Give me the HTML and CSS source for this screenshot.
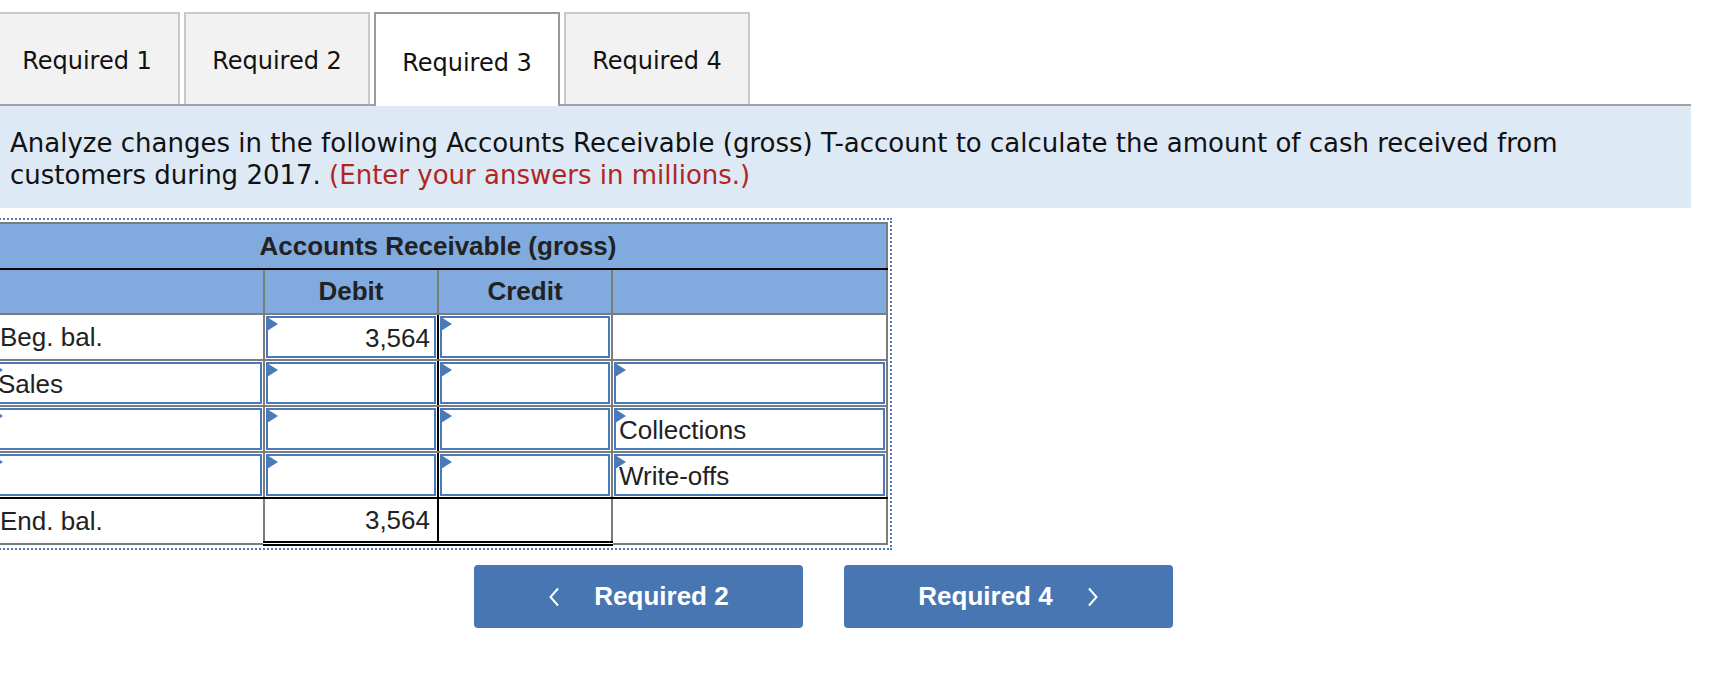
FILE: index.html
```html
<!DOCTYPE html>
<html>
<head>
<meta charset="utf-8">
<link rel="stylesheet" href="styles.css">
</head>
<body>
<div class="page">
  <div class="tabs">
    <div class="tab">Required 1</div>
    <div class="tab">Required 2</div>
    <div class="tab active">Required 3</div>
    <div class="tab">Required 4</div>
  </div>
  <div class="band">
    Analyze changes in the following Accounts Receivable (gross) T-account to calculate the amount of cash received from customers during 2017. <span class="hint">(Enter your answers in millions.)</span>
  </div>
  <div class="twrap">
    <table class="tacct">
      <colgroup>
        <col class="c-lab"><col class="c-num"><col class="c-num"><col class="c-rlab">
      </colgroup>
      <tr class="h1"><th colspan="4">Accounts Receivable (gross)</th></tr>
      <tr class="h2"><th></th><th>Debit</th><th>Credit</th><th></th></tr>
      <tr class="r">
        <td class="lab"><div class="txt">Beg. bal.</div></td>
        <td class="deb in"><div class="inp num">3,564</div></td>
        <td class="in"><div class="inp"></div></td>
        <td class="rlab"></td>
      </tr>
      <tr class="r">
        <td class="in"><div class="inp lead">Sales</div></td>
        <td class="deb in"><div class="inp"></div></td>
        <td class="in"><div class="inp"></div></td>
        <td class="in"><div class="inp"></div></td>
      </tr>
      <tr class="r">
        <td class="in"><div class="inp lead"></div></td>
        <td class="deb in"><div class="inp"></div></td>
        <td class="in"><div class="inp"></div></td>
        <td class="in"><div class="inp">Collections</div></td>
      </tr>
      <tr class="r last">
        <td class="in"><div class="inp lead"></div></td>
        <td class="deb in"><div class="inp"></div></td>
        <td class="in"><div class="inp"></div></td>
        <td class="in"><div class="inp">Write-offs</div></td>
      </tr>
      <tr class="r end">
        <td class="lab"><div class="txt">End. bal.</div></td>
        <td class="deb tot"><div class="txt num">3,564</div></td>
        <td class="tot"><div class="txt"></div></td>
        <td class="rlab"></td>
      </tr>
    </table>
  </div>
  <div class="nav">
    <div class="btn">
      <svg class="chev" width="12" height="20" viewBox="0 0 12 20"><polyline points="10,1.5 2.5,10 10,18.5" fill="none" stroke="#fff" stroke-width="2"/></svg>
      <span>Required 2</span>
    </div>
    <div class="btn">
      <span>Required 4</span>
      <svg class="chev" width="12" height="20" viewBox="0 0 12 20"><polyline points="2,1.5 9.5,10 2,18.5" fill="none" stroke="#fff" stroke-width="2"/></svg>
    </div>
  </div>
</div>
</body>
</html>
```
FILE: styles.css
```css
html, body {
  margin: 0;
  padding: 0;
  background: #fff;
}
.page {
  width: 1691px;
  font-family: "DejaVu Sans", Verdana, sans-serif;
  color: #111;
}
.tabs {
  display: flex;
  gap: 4px;
  margin-left: -6px;
  padding-top: 12px;
  border-bottom: 2px solid #a3a3a3;
}
.tab {
  box-sizing: border-box;
  width: 186px;
  height: 92px;
  background: #f2f2f2;
  border: 2px solid #c9c9c9;
  border-bottom: none;
  display: flex;
  align-items: center;
  justify-content: center;
  font-size: 24px;
  padding-top: 4px;
}
.tab.active {
  background: #fff;
  border-color: #9a9a9a;
  height: 94px;
  margin-bottom: -2px;
  padding-top: 6px;
}
.band {
  background: #dee9f6;
  padding: 21px 10px 17px 10px;
  font-size: 26px;
  line-height: 32px;
}
.hint {
  color: #b0261f;
}
.twrap {
  display: block;
  width: fit-content;
  margin-top: 10px;
  margin-left: -16px;
  border: 2px dotted #4a7ab9;
  padding: 2px;
}
.tacct {
  border-collapse: collapse;
  table-layout: fixed;
  width: 898px;
  font-family: "Liberation Sans", Arial, sans-serif;
  font-size: 26px;
  color: #222;
}
.c-lab { width: 275px; }
.c-num { width: 174px; }
.c-rlab { width: 275px; }
.tacct th, .tacct td {
  border: 2px solid #7c7c7c;
  padding: 0;
}
.tacct th {
  background: #81aadf;
  font-weight: bold;
  height: 44px;
  color: #222;
}
.h1 th {
  border-bottom: 2px solid #000;
}
.h2 th {
  height: 43px;
}
.tacct td {
  height: 44px;
  padding: 1px;
  box-sizing: border-box;
}
.tacct td.lab, .tacct td.rlab, .tacct td.tot {
  padding: 0;
}
.tacct td.deb {
  border-right: 2px solid #000;
}
.r.last td {
  border-bottom: 2px solid #000;
}
.tacct td.tot {
  border-bottom: 5px double #000;
}
.txt {
  height: 44px;
  line-height: 44px;
  padding: 0 6px 0 10px;
}
.end .txt {
  height: 42px;
  line-height: 42px;
}
.inp {
  position: relative;
  box-sizing: border-box;
  height: 42px;
  line-height: 40px;
  border: 2px solid #4a7ab9;
  padding: 0 4px 0 3px;
}
.inp.lead {
  padding-left: 5px;
}
.inp::before {
  content: "";
  position: absolute;
  left: -1px;
  top: -1px;
  width: 0;
  height: 0;
  border-left: 11px solid #4a7ab9;
  border-top: 7px solid transparent;
  border-bottom: 7px solid transparent;
}
.num {
  text-align: right;
}
.txt.num {
  padding-right: 7px;
}
.nav {
  display: flex;
  gap: 41px;
  margin-top: 15px;
  padding-left: 474px;
}
.btn {
  width: 329px;
  height: 63px;
  box-sizing: border-box;
  background: #4876b3;
  border-radius: 4px;
  display: flex;
  align-items: center;
  justify-content: center;
  gap: 34px;
  color: #fff;
  font-family: "Liberation Sans", Arial, sans-serif;
  font-weight: bold;
  font-size: 26px;
}
.chev {
  display: block;
}
```
